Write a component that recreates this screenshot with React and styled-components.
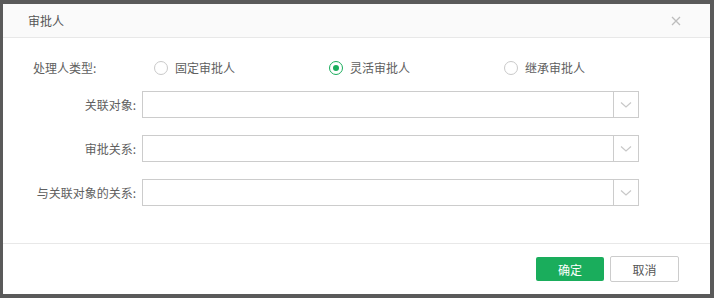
import React from "react";
import styled, { createGlobalStyle } from "styled-components";

const GlobalStyle = createGlobalStyle`
  html, body {
    margin: 0;
    padding: 0;
    background: #5a5a5a;
  }
  body {
    font-family: "Noto Sans CJK SC", "Noto Sans", sans-serif;
    font-size: 12px;
    color: #606060;
  }
`;

const radios = [
  { label: "固定审批人", checked: false },
  { label: "灵活审批人", checked: true },
  { label: "继承审批人", checked: false },
];

const selects = ["关联对象:", "审批关系:", "与关联对象的关系:"];

function Chevron() {
  return (
    <svg width="12" height="8" viewBox="0 0 12 8">
      <path d="M1 1.5 L6 6 L11 1.5" fill="none" stroke="#c8c8c8" strokeWidth="1.2" />
    </svg>
  );
}

function CloseIcon() {
  return (
    <svg width="10" height="10" viewBox="0 0 10 10">
      <path d="M1 1 L9 9 M9 1 L1 9" stroke="#bdbdbd" strokeWidth="1.3" />
    </svg>
  );
}

export default function App() {
  return (
    <>
      <GlobalStyle />
      <Dialog>
        <Header>
          <Title>审批人</Title>
          <CloseIcon />
        </Header>
        <Body>
          <RadioRow>
            <TypeLabel>处理人类型:</TypeLabel>
            <RadioGroup>
              {radios.map((r) => (
                <RadioItem key={r.label}>
                  <RadioCircle $checked={r.checked} />
                  <span>{r.label}</span>
                </RadioItem>
              ))}
            </RadioGroup>
          </RadioRow>
          {selects.map((s) => (
            <SelectRow key={s}>
              <FieldLabel>{s}</FieldLabel>
              <SelectBox>
                <SelectValue />
                <Arrow>
                  <Chevron />
                </Arrow>
              </SelectBox>
            </SelectRow>
          ))}
        </Body>
        <Footer>
          <PrimaryButton>确定</PrimaryButton>
          <Button>取消</Button>
        </Footer>
      </Dialog>
    </>
  );
}

const Dialog = styled.div`
  margin: 4px 0 0 3px;
  width: 707px;
  height: 290px;
  background: #fff;
  display: flex;
  flex-direction: column;
`;

const Header = styled.div`
  height: 33px;
  background: #fafafa;
  border-bottom: 1px solid #e8e8e8;
  display: flex;
  align-items: center;
  justify-content: space-between;
  padding: 0 29px 0 25px;
`;

const Title = styled.div`
  font-size: 12px;
  color: #555;
`;

const Body = styled.div`
  flex: 1;
  padding: 16px 0 0 30px;
  display: flex;
  flex-direction: column;
  gap: 17px;
`;

const RadioRow = styled.div`
  height: 27px;
  display: flex;
  align-items: center;
  margin-bottom: -7px;
`;

const TypeLabel = styled.div`
  width: 121px;
`;

const RadioGroup = styled.div`
  display: flex;
`;

const RadioItem = styled.label`
  width: 175px;
  display: flex;
  align-items: center;
  gap: 7px;
`;

const RadioCircle = styled.span`
  box-sizing: border-box;
  width: 14px;
  height: 14px;
  border-radius: 50%;
  border: 1px solid ${(p) => (p.$checked ? "#1aad5c" : "#c9c9c9")};
  display: flex;
  align-items: center;
  justify-content: center;
  &::after {
    content: "";
    width: 6px;
    height: 6px;
    border-radius: 50%;
    background: ${(p) => (p.$checked ? "#1aad5c" : "transparent")};
  }
`;

const SelectRow = styled.div`
  display: flex;
  align-items: center;
`;

const FieldLabel = styled.div`
  width: 103px;
  text-align: right;
  padding-right: 6px;
`;

const SelectBox = styled.div`
  box-sizing: border-box;
  width: 497px;
  height: 27px;
  border: 1px solid #ccc;
  display: flex;
`;

const SelectValue = styled.div`
  flex: 1;
`;

const Arrow = styled.div`
  width: 24px;
  border-left: 1px solid #ccc;
  display: flex;
  align-items: center;
  justify-content: center;
`;

const Footer = styled.div`
  height: 50px;
  border-top: 1px solid #e8e8e8;
  display: flex;
  justify-content: flex-end;
  align-items: center;
  gap: 6px;
  padding-right: 31px;
`;

const Button = styled.button`
  box-sizing: border-box;
  width: 69px;
  height: 26px;
  border: 1px solid #ccc;
  border-radius: 2px;
  background: #fff;
  color: #555;
  font-family: inherit;
  font-size: 12px;
  padding: 0;
`;

const PrimaryButton = styled(Button)`
  width: 68px;
  height: 24px;
  border: none;
  background: #1aad5c;
  color: #fff;
`;
